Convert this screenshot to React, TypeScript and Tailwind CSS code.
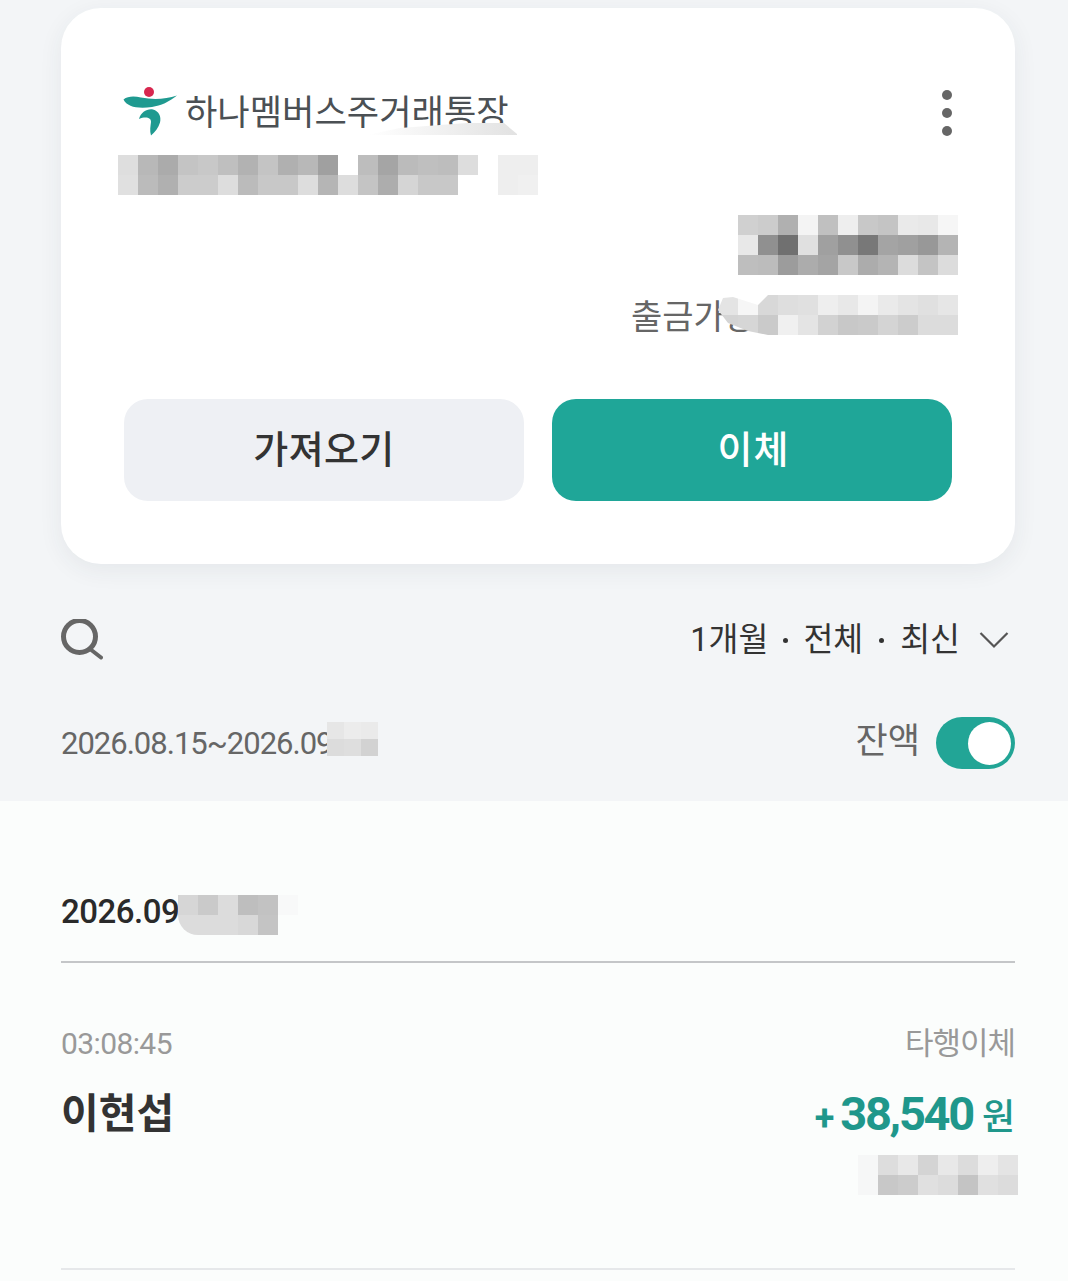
import React from "react";

const FONT = "[font-family:Roboto,'Noto_Sans_CJK_KR',sans-serif]";

function Mosaic({ rows, cell = 20, className = "" }: { rows: string[][]; cell?: number; className?: string }) {
  return (
    <div className={"flex flex-col " + className}>
      {rows.map((row, i) => (
        <div key={i} className="flex">
          {row.map((c, j) => (
            <div key={j} style={{ width: cell, height: cell, backgroundColor: "#" + c }} />
          ))}
        </div>
      ))}
    </div>
  );
}

const W = "ffffff";
const account = [
  ["dedede", "b8b8b8", "ababab", "c4c4c4", "c8c8c8", "bfbfbf", "b2b2b2", "c4c4c4", "b0b0b0", "b8b8b8", "a0a0a0", W, "bdbdbd", "a5a5a5", "bbbbbb", "bfbfbf", "bdbdbd", "dddddd", W, "eeeeee", "eeeeee"],
  ["e0e0e0", "bbbbbb", "b0b0b0", "cccccc", "cccccc", "dddddd", "bbbbbb", "c8c8c8", "c8c8c8", "dddddd", "b5b5b5", "dddddd", "c4c4c4", "adadad", "d5d5d5", "c8c8c8", "c8c8c8", W, W, "eeeeee", "f0f0f0"],
];
const balance = [
  ["d0d0d0", "cccccc", "b0b0b0", "f4f4f4", "c0c0c0", "eeeeee", "c8c8c8", "c4c4c4", "eaeaea", "e8e8e8", "f6f6f6"],
  ["e8e8e8", "909090", "707070", "e0e0e0", "a0a0a0", "909090", "787878", "a4a4a4", "a0a0a0", "989898", "b4b4b4"],
  ["bebebe", "bcbcbc", "9c9c9c", "acacac", "a4a4a4", "c8c8c8", "acacac", "b4b4b4", "dcdcdc", "c4c4c4", "dcdcdc"],
];
const withdraw = [
  ["e4e4e4", "f6f6f6", "d8d8d8", "dedede", "e0e0e0", "eeeeee", "e8e8e8", "f4f4f4", "eaeaea", "e4e4e4", "e0e0e0", "e6e6e6"],
  ["d4d4d4", "d6d6d6", "cacaca", "f0f0f0", "e4e4e4", "d2d2d2", "c8c8c8", "cacaca", "d4d4d4", "cccccc", "dcdcdc", "dcdcdc"],
];
const range = [
  ["e6e6e6", "ececec", "eaeaea"],
  ["dcdcdc", "dedede", "d2d2d2"],
];
const day = [
  ["d6d6d6", "cacaca", "dcdcdc", "bebebe", "c2c2c2", "f8f9f9"],
  ["dcdcdc", "dcdcdc", "dcdcdc", "d8d8d8", "c4c4c4", "fbfdfc"],
];
const after = [
  ["f6f7f7", "dddddd", "e8e8e8", "d4d4d4", "e8e8e8", "dcdcdc", "eeeeee", "e4e4e4"],
  ["f6f7f7", "c8c8c8", "cccccc", "e0e0e0", "dcdcdc", "c4c4c4", "e0e0e0", "dcdcdc"],
];

function HanaLogo() {
  return (
    <svg viewBox="0 0 65 60" className="w-[65px] h-[60px] shrink-0 -ml-[6px]">
      <circle cx="31" cy="11" r="5" fill="#d8274f" />
      <path d="M5.5 18.5 C10 15 16 15 23 16.5 C36 19 48 18 59 14.5 C51 21 43 24.5 34 26 C20 28 9 26 5.5 18.5 Z" fill="#1f9a90" />
      <path d="M21 38 C23 31 29 27.5 35 28.5 C41 30 43.5 36 42 41.5 C40.5 47 37 51 33 54.5 C31.5 50 32.5 45 33 41 C33.5 37 28 35 21 38 Z" fill="#1f9a90" />
    </svg>
  );
}

export default function App() {
  return (
    <div className={"w-[1068px] h-[1281px] overflow-hidden bg-[#f3f5f7] flex flex-col " + FONT}>
      <div className="pt-2 pl-[61px]">
        <div className="w-[954px] h-[556px] bg-white rounded-[40px] shadow-[0_6px_24px_rgba(40,50,70,0.07)] px-[63px] pt-[78px] flex flex-col">
          <div className="flex items-center justify-between h-[50px]">
            <div className="relative flex items-center gap-[2px]">
              <HanaLogo />
              <span className="text-[35.2px] leading-[50px] text-[#4b5054] whitespace-nowrap translate-y-[2px]">하나멤버스주거래통장</span>
              <div className="absolute left-[243px] top-[42px] w-[150px] h-[12px] bg-gradient-to-r from-white to-[#e2e2e2] [clip-path:polygon(0_12px,33px_5px,100px_0,137px_0,150px_11px,150px_12px)]" />
            </div>
            <div className="flex flex-col gap-[8px] items-center translate-y-[2px]">
              <div className="w-[10px] h-[10px] rounded-full bg-[#666]" />
              <div className="w-[10px] h-[10px] rounded-full bg-[#666]" />
              <div className="w-[10px] h-[10px] rounded-full bg-[#666]" />
            </div>
          </div>
          <Mosaic rows={account} className="-ml-[6px] mt-[19px]" />
          <Mosaic rows={balance} className="self-end -mr-[6px] mt-[20px]" />
          <div className="self-end -mr-[6px] mt-[20px] flex items-center h-[40px] relative">
            <span className="text-[34px] leading-[40px] text-[#666] whitespace-nowrap absolute right-[202px] top-[2px]">출금가능</span>
            <Mosaic
              rows={withdraw}
              className="relative [clip-path:polygon(0_15px,5px_3px,15px_2px,40px_10px,50px_0,240px_0,240px_40px,50px_40px,30px_36px,10px_28px)]"
            />
          </div>
          <div className="flex gap-7 mt-[64px]">
            <button className="w-[400px] h-[102px] rounded-[24px] bg-[#eef0f4] text-[38px] font-medium text-[#333] tracking-[0.4px]">가져오기</button>
            <button className="w-[400px] h-[102px] rounded-[24px] bg-[#1fa698] text-[38px] font-medium text-white tracking-[1px] pl-[3px]">이체</button>
          </div>
        </div>
      </div>

      <div className="pl-[61px] pr-[53px] mt-[53px] flex items-center justify-between h-[46px]">
        <svg viewBox="0 0 42 42" className="w-[42px] h-[42px]" fill="none" stroke="#666" strokeLinecap="round">
          <circle cx="18.5" cy="17.5" r="16" strokeWidth="5" />
          <path d="M29 30 L40 38.5" strokeWidth="4" />
        </svg>
        <div className="flex items-center text-[32.5px] leading-[46px] text-[#333] whitespace-nowrap">
          <span>1개월</span>
          <div className="w-[5px] h-[5px] rounded-full bg-[#333] mx-[15px]" />
          <span>전체</span>
          <div className="w-[5px] h-[5px] rounded-full bg-[#333] mx-[16px]" />
          <span>최신</span>
          <svg viewBox="0 0 30 18" className="w-[30px] h-[18px] ml-[19px] mr-[6px]" fill="none" stroke="#555" strokeWidth="2.2">
            <path d="M1.5 2 L15 15.5 L28.5 2" />
          </svg>
        </div>
      </div>

      <div className="pl-[61px] pr-[53px] mt-[54px] flex items-center justify-between h-[52px]">
        <div className="relative flex items-center">
          <span className="text-[31px] leading-[52px] text-[#666] whitespace-nowrap tracking-[-1px] translate-y-[1px]">2026.08.15~2026.09</span>
          <Mosaic rows={range} cell={17} className="absolute left-[266px] top-[5px]" />
        </div>
        <div className="flex items-center gap-4">
          <span className="text-[35px] leading-[52px] text-[#666] -translate-y-[1px]">잔액</span>
          <div className="w-[79px] h-[52px] rounded-full bg-[#22a596] flex items-center justify-end pr-[4px]">
            <div className="w-[43px] h-[43px] rounded-full bg-white" />
          </div>
        </div>
      </div>

      <div className="flex-1 mt-[32px] bg-[#fbfdfc] pl-[61px] pr-[53px]">
        <div className="relative mt-[86px] h-[48px] flex items-center">
          <span className="text-[33px] leading-[48px] font-medium text-[#2a2a2a] tracking-[-0.5px] translate-y-[1px]">2026.09</span>
          <Mosaic rows={day} className="absolute left-[117px] top-[8px] rounded-bl-[20px] overflow-hidden" />
        </div>
        <div className="mt-[26px] h-[2px] bg-[#c4c6c8]" />
        <div className="mt-[63px] flex items-center justify-between h-[36px]">
          <span className="text-[30px] leading-[36px] text-[#999] tracking-[-0.6px]">03:08:45</span>
          <span className="text-[31px] leading-[36px] text-[#999] tracking-[-1px]">타행이체</span>
        </div>
        <div className="mt-[25px] flex items-start justify-between">
          <span className="text-[41px] leading-[54px] font-bold text-[#333]">이현섭</span>
          <div className="flex items-baseline text-[#1f978b] whitespace-nowrap">
            <span className="text-[36px] leading-[54px] font-bold mr-[6px]">+</span>
            <span className="text-[47px] leading-[54px] font-bold tracking-[-2.3px]">38,540</span>
            <span className="text-[36px] leading-[54px] font-medium ml-[9px]">원</span>
          </div>
        </div>
        <div className="flex justify-end -mr-[3px] mt-[10px]">
          <Mosaic rows={after} />
        </div>
        <div className="mt-[73px] h-[2px] bg-[#e6e8ea]" />
      </div>
    </div>
  );
}
